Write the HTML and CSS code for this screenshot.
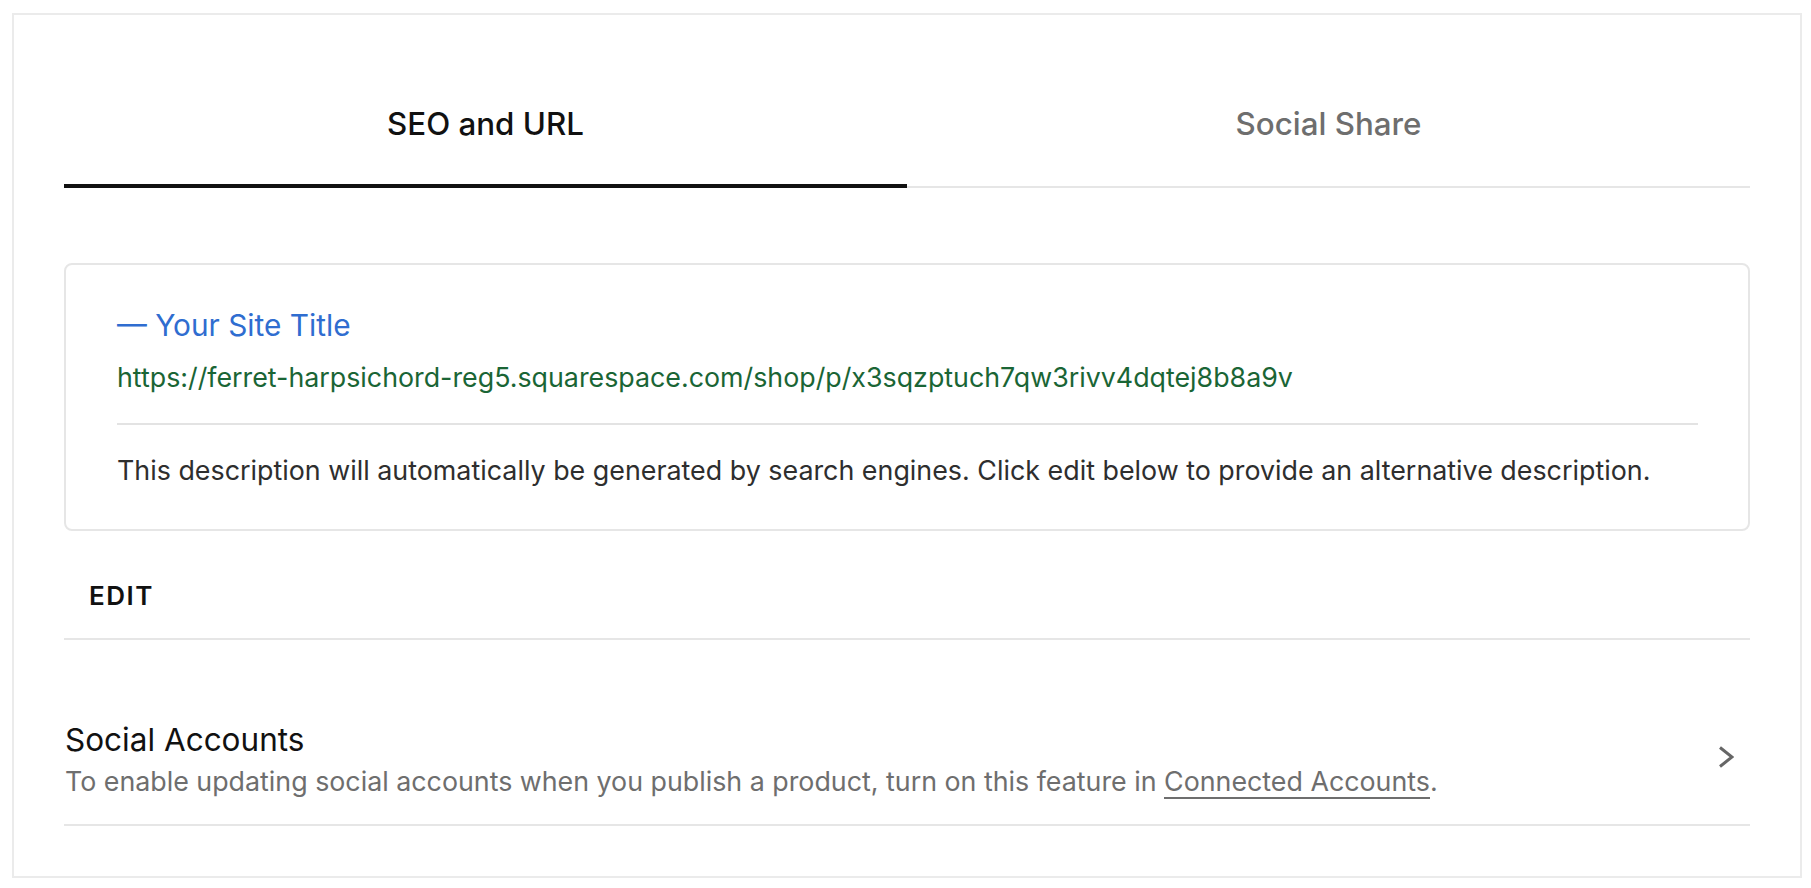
FILE: index.html
```html
<!DOCTYPE html>
<html lang="en">
<head>
<meta charset="utf-8">
<title>SEO and URL</title>
<link rel="stylesheet" href="styles.css">
</head>
<body>
<div class="frame">
  <div class="tabs">
    <div class="tab tab-active">SEO and URL</div>
    <div class="tab">Social Share</div>
  </div>

  <div class="preview">
    <div class="preview-title">— Your Site Title</div>
    <div class="preview-url">https://ferret-harpsichord-reg5.squarespace.com/shop/p/x3sqzptuch7qw3rivv4dqtej8b8a9v</div>
    <div class="preview-desc">This description will automatically be generated by search engines. Click edit below to provide an alternative description.</div>
  </div>

  <div class="edit-row">
    <span class="edit-btn">EDIT</span>
  </div>

  <div class="social-row">
    <div class="social-text">
      <div class="social-title">Social Accounts</div>
      <div class="social-sub">To enable updating social accounts when you publish a product, turn on this feature in <span class="link">Connected Accounts</span>.</div>
    </div>
    <div class="chevron">
      <svg width="16" height="22" viewBox="0 0 16 22" aria-hidden="true"><polyline points="2,1.5 14,11 2,20.5" fill="none" stroke="#666" stroke-width="3" stroke-linejoin="miter"/></svg>
    </div>
  </div>
</div>
</body>
</html>
```

FILE: styles.css
```css
html, body {
  margin: 0;
  padding: 0;
  background: #ffffff;
}

body {
  font-family: "Inter", "Liberation Sans", sans-serif;
  color: #111;
}

.frame {
  margin: 13px 9px 11px 12px;
  border: 2px solid #ebebeb;
  padding: 0 50px 50px 50px;
  box-sizing: border-box;
}

/* Tabs */
.tabs {
  display: grid;
  grid-template-columns: 1fr 1fr;
}

.tab {
  height: 173px;
  box-sizing: border-box;
  padding-top: 89px;
  text-align: center;
  font-size: 31.3px;
  line-height: 40px;
  font-weight: 500;
  color: #6e6e6e;
  border-bottom: 2px solid #e6e6e6;
}

.tab-active {
  color: #111;
  border-bottom: 4px solid #111;
}

/* Search preview card */
.preview {
  margin-top: 75px;
  border: 2px solid #e6e6e6;
  border-radius: 8px;
  padding: 42px 50px 41px 51px;
}

.preview-title {
  font-size: 29.8px;
  line-height: 36px;
  color: #2f6dd0;
}

.preview-url {
  margin-top: 16px;
  font-size: 26.8px;
  line-height: 36px;
  color: #1a6535;
  padding-bottom: 28px;
  border-bottom: 2px solid #e3e3e3;
}

.preview-desc {
  margin-top: 27px;
  font-size: 26.85px;
  line-height: 36px;
  color: #2e2e2e;
}

/* Edit */
.edit-row {
  padding: 50px 25px 27px;
  border-bottom: 2px solid #e6e6e6;
}

.edit-btn {
  display: block;
  font-size: 26px;
  line-height: 30px;
  font-weight: 600;
  letter-spacing: 1.5px;
  color: #111;
}

/* Social accounts */
.social-row {
  display: flex;
  align-items: center;
  padding: 82px 0 26px 1px;
  border-bottom: 2px solid #e6e6e6;
}

.social-text {
  flex: 1;
}

.social-title {
  font-size: 31.5px;
  line-height: 36px;
  color: #111;
}

.social-sub {
  margin-top: 6px;
  font-size: 26.8px;
  line-height: 34px;
  color: #6e6e6e;
}

.link {
  border-bottom: 2px solid #6e6e6e;
}

.chevron {
  display: flex;
  padding-right: 16px;
  margin-top: -6px;
}
```
